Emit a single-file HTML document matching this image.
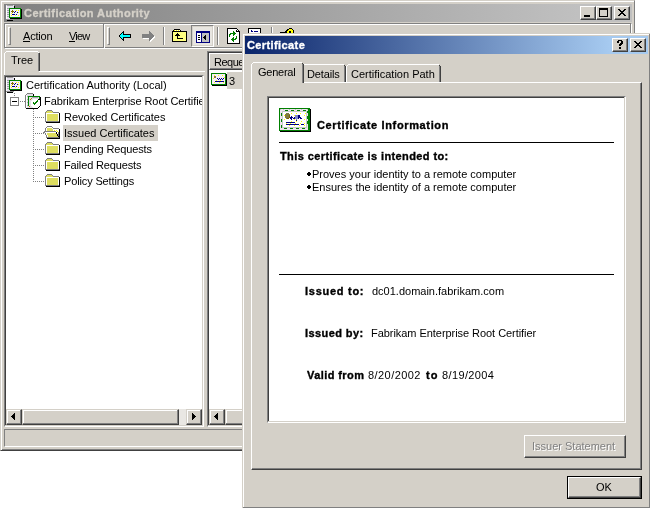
<!DOCTYPE html>
<html><head><meta charset="utf-8">
<style>
html,body{margin:0;padding:0;}
body{width:650px;height:508px;background:#fff;position:relative;overflow:hidden;font-family:"Liberation Sans",sans-serif;font-size:11px;color:#000;}
div,span,svg{box-sizing:border-box;}
.a{position:absolute;}
.t{position:absolute;white-space:nowrap;line-height:13px;will-change:transform;}
.b{font-weight:bold;-webkit-text-stroke:0.35px currentColor;}
.face{background:#D4D0C8;}
/* caption / raised button */
.cap{position:absolute;background:#D4D0C8;border:1px solid;border-color:#D4D0C8 #404040 #404040 #D4D0C8;box-shadow:inset -1px -1px #808080,inset 1px 1px #fff;}
.btn{position:absolute;background:#D4D0C8;border:1px solid;border-color:#fff #404040 #404040 #fff;box-shadow:inset -1px -1px #808080,inset 1px 1px #D4D0C8;}
.sunk{position:absolute;border:1px solid;border-color:#808080 #fff #fff #808080;box-shadow:inset -1px -1px #D4D0C8,inset 1px 1px #404040;}
.thin{position:absolute;border:1px solid;border-color:#808080 #fff #fff #808080;}
.vl{position:absolute;width:1px;}
.hl{position:absolute;height:1px;}
.dv{position:absolute;width:1px;background:repeating-linear-gradient(to bottom,#808080 0 1px,transparent 1px 2px);}
.dh{position:absolute;height:1px;background:repeating-linear-gradient(to right,#808080 0 1px,transparent 1px 2px);}
svg{position:absolute;shape-rendering:crispEdges;overflow:visible;}
</style></head><body>

<!-- ================= MAIN WINDOW ================= -->
<div class="a" style="left:0;top:0;width:635px;height:451px;background:#D4D0C8;border:1px solid;border-color:#D4D0C8 #808080 #404040 #D4D0C8;box-shadow:inset 1px 1px #fff,inset -1px 0 #D4D0C8,inset 0 -1px #808080;"></div>
<!-- title bar -->
<div class="a" style="left:4px;top:4px;width:628px;height:18px;background:linear-gradient(to right,#808080 0,#C0C0C0 574px,#C0C0C0 100%);"></div>
<div class="t b" id="mwtitle" style="left:24px;top:7px;color:#D4D0C8;letter-spacing:0.45px;">Certification Authority</div>
<!-- title icon -->
<svg id="ico-title" style="left:5px;top:4px" width="17" height="17" viewBox="0 0 17 17">
 <rect x="1" y="1" width="8" height="15" fill="#E4E0EC"/>
 <rect x="2" y="1" width="6" height="1" fill="#A0A0A0"/>
 <rect x="1" y="2" width="1" height="13" fill="#fff"/>
 <rect x="2" y="4" width="2" height="1" fill="#A0A0A8"/><rect x="2" y="6" width="2" height="1" fill="#A0A0A8"/><rect x="2" y="8" width="2" height="1" fill="#A0A0A8"/><rect x="2" y="10" width="2" height="1" fill="#A0A0A8"/><rect x="2" y="12" width="2" height="1" fill="#A0A0A8"/>
 <rect x="1" y="15" width="8" height="1" fill="#909090"/>
 <rect x="2" y="16" width="6" height="1" fill="#000"/>
 <rect x="9" y="2" width="1" height="2" fill="#000"/>
 <rect x="5" y="5" width="12" height="10" fill="#000"/>
 <rect x="4" y="4" width="12" height="10" fill="#008000"/>
 <rect x="5" y="5" width="10" height="8" fill="#F4F0FA"/>
 <path d="M7 6h1v1h1v1h-1v1h-1v-1h-1v-1h1z" fill="#8A7000"/>
 <path d="M11 6h1v1h-1zM13 6h1v1h-1zM6 9h1v1h-1zM13 8h1v1h-1zM6 12h1v-1h0v1zM6 11h1v1h-1zM10 11h1v1h-1zM13 11h1v1h-1z" fill="#FF0"/>
 <path d="M10 7h1v1h-1zM9 8h1v1h-1zM12 8h1v1h-1zM7 10h3v1h-3zM11 10h1v1h-1z" fill="#000080"/>
</svg>
<!-- caption buttons -->
<div class="btn" style="left:580px;top:6px;width:16px;height:14px;"></div>
<div class="a" style="left:584px;top:15px;width:6px;height:2px;background:#000;"></div>
<div class="btn" style="left:596px;top:6px;width:16px;height:14px;"></div>
<div class="a" style="left:599px;top:8px;width:9px;height:9px;border:1px solid #000;border-top-width:2px;"></div>
<div class="btn" style="left:614px;top:6px;width:16px;height:14px;"></div>
<svg style="left:618px;top:9px" width="8" height="7" viewBox="0 0 8 7"><path d="M0 0h2v1h-2zM6 0h2v1h-2zM1 1h2v1h-2zM5 1h2v1h-2zM2 2h4v1h-4zM3 3h2v1h-2zM2 4h4v1h-4zM1 5h2v1h-2zM5 5h2v1h-2zM0 6h2v1h-2zM6 6h2v1h-2z" fill="#000"/></svg>

<!-- rebar (etched) -->
<div class="a" style="left:4px;top:23px;width:628px;height:26px;border:1px solid;border-color:#808080 #fff #fff #808080;box-shadow:inset -1px -1px #808080,inset 1px 1px #fff;"></div>
<!-- band 1 gripper -->
<div class="a" style="left:8px;top:27px;width:3px;height:18px;border:1px solid;border-color:#fff #808080 #808080 #fff;"></div>
<div class="t" style="left:23px;top:30px;letter-spacing:-0.2px;">Action</div>
<div class="a" style="left:23px;top:41px;width:7px;height:1px;background:#000;"></div>
<div class="t" style="left:69px;top:30px;letter-spacing:-0.8px;">View</div>
<div class="a" style="left:69px;top:41px;width:6px;height:1px;background:#000;"></div>
<!-- band separator -->
<div class="vl" style="left:103px;top:24px;height:24px;background:#808080;"></div>
<div class="vl" style="left:104px;top:24px;height:24px;background:#fff;"></div>
<!-- band 2 gripper -->
<div class="a" style="left:107px;top:27px;width:3px;height:18px;border:1px solid;border-color:#fff #808080 #808080 #fff;"></div>
<!-- back arrow -->
<svg style="left:118px;top:30px" width="14" height="12" viewBox="0 0 14 12">
 <path d="M1 5h1v2h-1zM2 4h1v4h-1zM3 3h1v6h-1zM4 2h1v8h-1zM5 1h1v10h-1zM6 4h7v4h-7z" fill="#000"/>
 <path d="M2 5h1v2h-1zM3 4h1v4h-1zM4 3h1v6h-1zM5 5h7v2h-7z" fill="#0FF"/>
</svg>
<!-- forward arrow disabled -->
<svg style="left:141px;top:30px" width="15" height="13" viewBox="0 0 15 13">
 <path d="M1 4h7v4h-7zM8 1h1v10h-1zM9 2h1v8h-1zM10 3h1v6h-1zM11 4h1v4h-1zM12 5h1v2h-1z" fill="#fff" transform="translate(1,1)"/>
 <path d="M1 4h7v4h-7zM8 1h1v10h-1zM9 2h1v8h-1zM10 3h1v6h-1zM11 4h1v4h-1zM12 5h1v2h-1z" fill="#808080"/>
</svg>
<!-- separator -->
<div class="vl" style="left:163px;top:27px;height:18px;background:#808080;"></div>
<div class="vl" style="left:164px;top:27px;height:18px;background:#fff;"></div>
<!-- folder up -->
<svg style="left:172px;top:29px" width="15" height="13" viewBox="0 0 15 13">
 <path d="M2 0h6v1h1v1h6v11h-15v-11h1v-1h1z" fill="#000"/>
 <path d="M1 3h13v9h-13z" fill="#FFFF80"/>
 <path d="M2 1h1v1h-1zM4 1h1v1h-1zM6 1h1v1h-1z" fill="#FFFF00"/>
 <path d="M3 1h1v1h-1zM5 1h1v1h-1zM7 1h1v1h-1z" fill="#fff"/>
 <path d="M5 4h1v1h1v1h1v1h-2v2h5v1h-6v-3h-2v-1h1v-1h1z" fill="#000"/>
</svg>
<!-- pressed toggle button -->
<div class="a" style="left:191px;top:25px;width:23px;height:22px;border:1px solid;border-color:#808080 #fff #fff #808080;background:#E8E6E1;box-shadow:inset 1px 1px #D4D0C8,inset -1px -1px #D4D0C8;"></div>
<svg style="left:196px;top:31px" width="14" height="12" viewBox="0 0 14 12">
 <rect x="0" y="0" width="14" height="12" fill="#000080"/>
 <rect x="1" y="2" width="4" height="9" fill="#fff"/>
 <rect x="6" y="2" width="7" height="9" fill="#C0C0C0"/>
 <rect x="2" y="4" width="2" height="1" fill="#000"/><rect x="2" y="6" width="2" height="1" fill="#000"/><rect x="2" y="8" width="2" height="1" fill="#000"/>
 <path d="M7 6h1v1h-1zM8 5h1v3h-1zM9 4h1v5h-1z" fill="#000"/>
</svg>
<!-- separator -->
<div class="vl" style="left:217px;top:27px;height:18px;background:#808080;"></div>
<div class="vl" style="left:218px;top:27px;height:18px;background:#fff;"></div>
<!-- refresh icon -->
<svg style="left:227px;top:28px" width="13" height="16" viewBox="0 0 13 16">
 <path d="M0 0h10v1h1v1h1v1h1v13h-13z" fill="#000"/>
 <path d="M1 1h8v3h3v11h-11z" fill="#fff"/>
 <path d="M9 1h1v1h1v1h-1v-1h-1z" fill="#fff"/>
 <path d="M6 3h1v1h1v1h1v1h-1v1h-1v1h-1v-2h-2v1h-1v2h-1v-3h1v-1h3z" fill="#008000"/>
 <path d="M9 8h1v3h-1v1h-2v2h-1v-1h-1v-1h-1v-1h1v-1h1v-1h1v2h1v-1h1z" fill="#008000"/>
</svg>
<!-- properties icon -->
<svg style="left:248px;top:28px" width="14" height="6" viewBox="0 0 14 6">
 <rect x="0" y="0" width="13" height="6" fill="#000"/>
 <rect x="1" y="1" width="11" height="5" fill="#fff"/>
 <rect x="3" y="2" width="1" height="1" fill="#000080"/><rect x="3" y="3" width="2" height="1" fill="#000080"/>
 <rect x="6" y="3" width="4" height="1" fill="#000080"/>
</svg>
<div class="vl" style="left:271px;top:27px;height:6px;background:#808080;"></div>
<div class="vl" style="left:272px;top:27px;height:6px;background:#fff;"></div>
<!-- help icon -->
<svg style="left:280px;top:28px" width="15" height="6" viewBox="0 0 15 6">
 <rect x="0" y="4" width="5" height="1" fill="#000"/>
 <path d="M5 3h1v-1h1v-1h2v-1h3v1h1v1h1v4h-9z" fill="#000"/>
 <path d="M7 3h1v-1h1v-1h3v1h1v4h-6z" fill="#FF0"/>
 <rect x="9" y="3" width="2" height="3" fill="#000"/>
</svg>

<!-- Tree tab -->
<div class="hl" style="left:39px;top:71px;width:166px;background:#fff;"></div>
<div class="vl" style="left:4px;top:53px;height:23px;background:#fff;"></div>
<div class="a" style="left:5px;top:52px;width:1px;height:1px;background:#fff;"></div>
<div class="hl" style="left:6px;top:51px;width:32px;background:#fff;"></div>
<div class="a" style="left:38px;top:52px;width:1px;height:1px;background:#fff;"></div>
<div class="vl" style="left:38px;top:53px;height:18px;background:#808080;"></div>
<div class="vl" style="left:39px;top:53px;height:18px;background:#404040;"></div>
<div class="t" style="left:11px;top:54px;">Tree</div>

<!-- Tree pane -->
<div class="sunk" style="left:4px;top:75px;width:200px;height:352px;background:#fff;"></div>
<!-- tree rows -->
<div class="a" style="left:0;top:0;width:202px;height:409px;overflow:hidden;">
<svg id="ico-ca" style="left:5px;top:76px" width="17" height="17" viewBox="0 0 17 17">
 <rect x="1" y="1" width="8" height="15" fill="#E4E0EC"/>
 <rect x="2" y="1" width="6" height="1" fill="#A0A0A0"/>
 <rect x="1" y="2" width="1" height="13" fill="#fff"/>
 <rect x="2" y="4" width="2" height="1" fill="#A0A0A8"/><rect x="2" y="6" width="2" height="1" fill="#A0A0A8"/><rect x="2" y="8" width="2" height="1" fill="#A0A0A8"/><rect x="2" y="10" width="2" height="1" fill="#A0A0A8"/><rect x="2" y="12" width="2" height="1" fill="#A0A0A8"/>
 <rect x="1" y="15" width="8" height="1" fill="#909090"/>
 <rect x="2" y="16" width="6" height="1" fill="#000"/>
 <rect x="9" y="2" width="1" height="2" fill="#000"/>
 <rect x="5" y="5" width="12" height="10" fill="#000"/>
 <rect x="4" y="4" width="12" height="10" fill="#008000"/>
 <rect x="5" y="5" width="10" height="8" fill="#F4F0FA"/>
 <path d="M7 6h1v1h1v1h-1v1h-1v-1h-1v-1h1z" fill="#8A7000"/>
 <path d="M11 6h1v1h-1zM13 6h1v1h-1zM6 9h1v1h-1zM13 8h1v1h-1zM6 12h1v-1h0v1zM6 11h1v1h-1zM10 11h1v1h-1zM13 11h1v1h-1z" fill="#FF0"/>
 <path d="M10 7h1v1h-1zM9 8h1v1h-1zM12 8h1v1h-1zM7 10h3v1h-3zM11 10h1v1h-1z" fill="#000080"/>
</svg>
<div class="t" style="left:26px;top:79px;">Certification Authority (Local)</div>
<!-- row 2 -->
<div class="dv" style="left:14px;top:93px;height:4px;"></div>
<div class="a" style="left:10px;top:97px;width:9px;height:9px;border:1px solid #808080;background:#fff;"></div>
<div class="a" style="left:12px;top:101px;width:5px;height:1px;background:#000;"></div>
<div class="dh" style="left:20px;top:101px;width:5px;"></div>
<svg style="left:24px;top:92px" width="18" height="18" viewBox="0 0 18 18">
 <path d="M3 1h6v1h-6zM2 2h1v1h-1zM1 3h1v1h-1zM1 4h1v1h-1zM1 5h1v1h-1zM1 6h1v1h-1zM1 7h1v1h-1zM1 8h1v1h-1zM0 9h2v1h-2zM1 10h1v1h-1zM1 11h1v1h-1zM1 12h1v1h-1zM1 13h1v1h-1zM1 14h1v1h-1zM1 15h1v1h-1zM9 17h1v1h-1z" fill="#808080"/>
 <path d="M3 2h6v1h-6zM3 3h6v1h-6zM3 5h1v1h-1zM5 5h3v1h-3zM14 5h1v1h-1zM3 6h1v1h-1zM5 6h2v1h-2zM8 6h7v1h-7zM5 7h1v1h-1zM7 7h2v1h-2zM3 8h1v1h-1zM5 8h3v1h-3zM3 9h1v1h-1zM5 9h2v1h-2zM5 10h2v1h-2zM3 11h1v1h-1zM5 11h2v1h-2zM3 12h1v1h-1zM5 12h2v1h-2zM5 13h2v1h-2zM3 14h2v1h-2zM6 14h2v1h-2zM3 15h6v1h-6z" fill="#E4E0E8"/>
 <path d="M9 2h1v1h-1zM9 3h1v1h-1zM16 5h1v1h-1zM16 6h1v1h-1zM14 7h3v1h-3zM16 8h1v1h-1zM16 9h1v1h-1zM16 10h1v1h-1zM16 11h1v1h-1zM16 12h1v1h-1zM16 13h1v1h-1zM15 14h1v1h-1zM14 15h1v1h-1zM2 16h12v1h-12z" fill="#000"/>
 <path d="M2 3h1v1h-1zM2 4h1v1h-1zM2 5h1v1h-1zM2 6h1v1h-1zM2 7h1v1h-1zM9 7h5v1h-5zM2 8h1v1h-1zM8 8h5v1h-5zM14 8h2v1h-2zM2 9h1v1h-1zM7 9h5v1h-5zM14 9h2v1h-2zM2 10h1v1h-1zM7 10h2v1h-2zM10 10h1v1h-1zM13 10h3v1h-3zM2 11h1v1h-1zM7 11h2v1h-2zM12 11h4v1h-4zM2 12h1v1h-1zM7 12h3v1h-3zM11 12h5v1h-5zM2 13h1v1h-1zM7 13h9v1h-9zM2 14h1v1h-1zM8 14h7v1h-7zM2 15h1v1h-1zM9 15h5v1h-5z" fill="#fff"/>
 <path d="M3 4h1v1h-1zM8 5h6v1h-6zM3 7h1v1h-1zM3 10h1v1h-1zM3 13h1v1h-1z" fill="#A8A8B0"/>
 <path d="M4 4h12v1h-12zM4 5h1v1h-1zM15 5h1v1h-1zM4 6h1v1h-1zM15 6h1v1h-1zM4 7h1v1h-1zM4 8h1v1h-1zM13 8h1v1h-1zM4 9h1v1h-1zM12 9h2v1h-2zM4 10h1v1h-1zM9 10h1v1h-1zM11 10h2v1h-2zM4 11h1v1h-1zM9 11h3v1h-3zM4 12h1v1h-1zM10 12h1v1h-1zM4 13h1v1h-1z" fill="#008000"/>
 <path d="M7 6h1v1h-1zM6 7h1v1h-1zM5 14h1v1h-1z" fill="#B08000"/>
</svg>
<div class="t" style="left:44px;top:95px;letter-spacing:-0.08px;">Fabrikam Enterprise Root Certifier</div>
<!-- child lines -->
<div class="dv" style="left:33px;top:109px;height:73px;"></div>
<div class="dh" style="left:35px;top:117px;width:10px;"></div>
<div class="dh" style="left:35px;top:133px;width:10px;"></div>
<div class="dh" style="left:35px;top:149px;width:10px;"></div>
<div class="dh" style="left:35px;top:165px;width:10px;"></div>
<div class="dh" style="left:35px;top:181px;width:10px;"></div>
<!-- folders -->
<svg style="left:44px;top:108px" width="16" height="15" viewBox="0 0 16 15"><use href="#fold"/></svg>
<svg style="left:42px;top:125px" width="19" height="14" viewBox="0 0 19 14"><use href="#foldopen"/></svg>
<svg style="left:44px;top:140px" width="16" height="15" viewBox="0 0 16 15"><use href="#fold"/></svg>
<svg style="left:44px;top:156px" width="16" height="15" viewBox="0 0 16 15"><use href="#fold"/></svg>
<svg style="left:44px;top:172px" width="16" height="15" viewBox="0 0 16 15"><use href="#fold"/></svg>
<div class="t" style="left:64px;top:111px;">Revoked Certificates</div>
<div class="a" style="left:63px;top:125px;width:95px;height:16px;background:#D4D0C8;"></div>
<div class="t" style="left:64px;top:127px;">Issued Certificates</div>
<div class="t" style="left:64px;top:143px;letter-spacing:-0.13px;">Pending Requests</div>
<div class="t" style="left:64px;top:159px;letter-spacing:-0.14px;">Failed Requests</div>
<div class="t" style="left:64px;top:175px;letter-spacing:-0.14px;">Policy Settings</div>
</div>
<!-- tree h scrollbar -->
<div class="a" style="left:6px;top:409px;width:196px;height:16px;background:#E9E7E3;"></div>
<div class="cap" style="left:6px;top:409px;width:16px;height:16px;"></div>
<svg style="left:11px;top:413px" width="4" height="7" viewBox="0 0 4 7"><path d="M3 0h1v7h-1zM2 1h1v5h-1zM1 2h1v3h-1zM0 3h1v1h-1z" fill="#000"/></svg>
<div class="cap" style="left:22px;top:409px;width:157px;height:16px;"></div>
<div class="cap" style="left:186px;top:409px;width:16px;height:16px;"></div>
<svg style="left:192px;top:413px" width="4" height="7" viewBox="0 0 4 7"><path d="M0 0h1v7h-1zM1 1h1v5h-1zM2 2h1v3h-1zM3 3h1v1h-1z" fill="#000"/></svg>

<!-- List pane -->
<div class="sunk" style="left:207px;top:51px;width:60px;height:376px;background:#fff;"></div>
<div class="btn" style="left:209px;top:53px;width:60px;height:17px;border-color:#fff #404040 #404040 #fff;box-shadow:inset -1px -1px #808080;"></div>
<div class="t" style="left:214px;top:56px;letter-spacing:-0.5px;">Requested</div>
<svg style="left:211px;top:73px" width="16" height="13" viewBox="0 0 16 13">
 <rect x="1" y="1" width="15" height="12" fill="#000"/>
 <rect x="0" y="0" width="15" height="12" fill="#008000"/>
 <rect x="1" y="1" width="13" height="10" fill="#F4F0FA"/>
 <rect x="3" y="3" width="2" height="2" fill="#8A7A40"/>
 <path d="M6 5h1v1h-1zM7 6h1v1h-1zM8 5h1v1h-1zM10 5h1v1h-1zM9 6h1v1h-1zM11 6h1v1h-1zM12 5h1v1h-1z" fill="#000080"/>
 <rect x="4" y="8" width="9" height="1" fill="#000080"/>
 <path d="M3 2h1v1h-1zM7 2h1v1h-1zM11 2h1v1h-1zM2 5h1v1h-1zM13 4h1v1h-1zM3 9h1v1h-1zM8 9h1v1h-1zM12 9h1v1h-1zM5 7h1v1h-1zM9 7h1v1h-1z" fill="#FF0"/>
</svg>
<div class="a" style="left:227px;top:72px;width:30px;height:17px;background:#D4D0C8;"></div>
<div class="t" style="left:229px;top:75px;">3</div>
<div class="a" style="left:209px;top:409px;width:40px;height:16px;background:#E9E7E3;"></div>
<div class="cap" style="left:209px;top:409px;width:16px;height:16px;"></div>
<svg style="left:214px;top:413px" width="4" height="7" viewBox="0 0 4 7"><path d="M3 0h1v7h-1zM2 1h1v5h-1zM1 2h1v3h-1zM0 3h1v1h-1z" fill="#000"/></svg>
<div class="cap" style="left:225px;top:409px;width:40px;height:16px;"></div>

<!-- status bar -->
<div class="thin" style="left:4px;top:429px;width:627px;height:18px;"></div>

<!-- ================= DIALOG ================= -->
<div class="a" style="left:242px;top:33px;width:409px;height:476px;background:#D4D0C8;border:1px solid;border-color:#D4D0C8 #404040 #404040 #D4D0C8;box-shadow:inset -1px -1px #808080,inset 1px 1px #fff;"></div>
<div class="a" style="left:245px;top:36px;width:403px;height:18px;background:linear-gradient(to right,#0A246A 0,#A6CAF0 365px,#A6CAF0 100%);"></div>
<div class="t b" style="left:247px;top:39px;color:#fff;letter-spacing:0.4px;">Certificate</div>
<div class="btn" style="left:612px;top:38px;width:16px;height:14px;"></div>
<svg style="left:617px;top:40px" width="7" height="9" viewBox="0 0 7 9"><path d="M1 0h4v1h1v3h-1v1h-1v1h-2v-2h1v-1h1v-2h-2v2h-2v-2h1z M2 7h2v2h-2z" fill="#000"/></svg>
<div class="btn" style="left:630px;top:38px;width:16px;height:14px;"></div>
<svg style="left:634px;top:41px" width="8" height="7" viewBox="0 0 8 7"><path d="M0 0h2v1h-2zM6 0h2v1h-2zM1 1h2v1h-2zM5 1h2v1h-2zM2 2h4v1h-4zM3 3h2v1h-2zM2 4h4v1h-4zM1 5h2v1h-2zM5 5h2v1h-2zM0 6h2v1h-2zM6 6h2v1h-2z" fill="#000"/></svg>

<!-- tab panel -->
<div class="a" style="left:251px;top:82px;width:391px;height:388px;border:1px solid;border-color:#fff #404040 #404040 #fff;box-shadow:inset -1px -1px #808080;"></div>
<!-- Details tab -->
<div class="hl" style="left:304px;top:64px;width:40px;background:#fff;"></div>
<div class="vl" style="left:344px;top:66px;height:16px;background:#808080;"></div>
<div class="vl" style="left:345px;top:66px;height:16px;background:#404040;"></div>
<div class="a" style="left:344px;top:65px;width:1px;height:1px;background:#404040;"></div>
<div class="t" style="left:307px;top:68px;letter-spacing:-0.15px;">Details</div>
<!-- Cert path tab -->
<div class="vl" style="left:346px;top:66px;height:16px;background:#fff;"></div>
<div class="a" style="left:347px;top:65px;width:1px;height:1px;background:#fff;"></div>
<div class="hl" style="left:348px;top:64px;width:91px;background:#fff;"></div>
<div class="vl" style="left:439px;top:66px;height:16px;background:#808080;"></div>
<div class="vl" style="left:440px;top:66px;height:16px;background:#404040;"></div>
<div class="a" style="left:439px;top:65px;width:1px;height:1px;background:#404040;"></div>
<div class="t" style="left:351px;top:68px;">Certification Path</div>
<!-- General tab (selected) -->
<div class="a" style="left:251px;top:63px;width:53px;height:21px;background:#D4D0C8;"></div>
<div class="vl" style="left:251px;top:64px;height:20px;background:#fff;"></div>
<div class="a" style="left:252px;top:63px;width:1px;height:1px;background:#fff;"></div>
<div class="hl" style="left:253px;top:62px;width:49px;background:#fff;"></div>
<div class="vl" style="left:302px;top:64px;height:19px;background:#808080;"></div>
<div class="vl" style="left:303px;top:64px;height:19px;background:#404040;"></div>
<div class="a" style="left:302px;top:63px;width:1px;height:1px;background:#404040;"></div>
<div class="t" style="left:258px;top:66px;letter-spacing:-0.25px;">General</div>

<!-- white box -->
<div class="sunk" style="left:267px;top:96px;width:359px;height:327px;background:#fff;"></div>
<svg style="left:279px;top:108px" width="32" height="24" viewBox="0 0 32 24">
 <rect x="1" y="1" width="31" height="23" fill="#000"/>
 <rect x="0" y="0" width="31" height="23" fill="#008000"/>
 <rect x="1" y="1" width="28" height="21" fill="#EEE4EE"/>
 <path d="M1 1h1v1h-1zM4 1h1v1h-1zM10 1h1v1h-1zM16 1h1v1h-1zM22 1h1v1h-1zM28 1h1v1h-1z" fill="#C0C0C0"/>
 <path d="M6 2h3v1h-3zM12 2h3v1h-3zM18 2h3v1h-3zM24 2h3v1h-3z" fill="#008000"/>
 <path d="M2 5h1v3h-1zM2 11h1v3h-1zM2 17h1v3h-1z" fill="#008000"/>
 <path d="M5 20h3v1h-3zM11 20h3v1h-3zM17 20h3v1h-3zM23 20h3v1h-3z" fill="#008000"/>
 <path d="M28 3h1v2h-1zM28 8h1v3h-1zM28 13h1v3h-1z" fill="#008000"/>
 <rect x="3" y="3" width="25" height="17" fill="#C8C8C8"/>
 <rect x="4" y="4" width="23" height="15" fill="#fff"/>
 <path d="M7 5h3v1h1v4h-1v1h-3v-1h-1v-4h1z" fill="#807A40"/>
 <path d="M10 7h1v3h-1v1h-2v-1h2z" fill="#806000"/>
 <path d="M3 5h0z M12 5h1v1h-1zM17 5h1v1h-1zM21 5h1v1h-1zM26 5h1v1h-1zM5 7h1v1h-1zM15 7h1v1h-1zM25 7h1v1h-1zM5 11h1v1h-1zM15 11h1v1h-1zM25 11h1v1h-1zM12 13h1v1h-1zM17 13h1v1h-1zM22 13h1v1h-1zM7 15h1v1h-1zM11 15h1v1h-1zM16 15h1v1h-1zM21 15h1v1h-1zM25 15h1v1h-1zM10 17h1v1h-1zM15 17h1v1h-1zM20 17h1v1h-1zM25 17h1v1h-1z" fill="#FF0"/>
 <path d="M16 7h3v4h-1v1h-1v-1h-1z" fill="#8088C8"/>
 <path d="M11 9h1v-1h1v1h1v1h1v-1h1v2h-2v-1h-1v1h-1v-1h-1zM11 10h1v1h-1zM12 11h1v1h-1zM17 12h1v1h-1zM19 7h2v1h-1v1h-1zM19 9h1v-1h1v1h1v1h1v1h-2v-1h-1v1h-1z" fill="#000080"/>
 <rect x="7" y="14" width="9" height="1" fill="#000080"/>
 <rect x="7" y="16" width="13" height="1" fill="#000080"/>
 <rect x="22" y="16" width="3" height="1" fill="#000080"/>
</svg>
<div class="t b" style="left:317px;top:119px;letter-spacing:0.64px;">Certificate Information</div>
<div class="hl" style="left:279px;top:142px;width:335px;background:#000;"></div>
<div class="t b" style="left:280px;top:150px;letter-spacing:0.4px;">This certificate is intended to:</div>
<svg style="left:307px;top:172px" width="4" height="4" viewBox="0 0 4 4"><path d="M1 0h2v1h1v2h-1v1h-2v-1h-1v-2h1z" fill="#000"/></svg>
<div class="t" style="left:312px;top:168px;">Proves your identity to a remote computer</div>
<svg style="left:307px;top:185px" width="4" height="4" viewBox="0 0 4 4"><path d="M1 0h2v1h1v2h-1v1h-2v-1h-1v-2h1z" fill="#000"/></svg>
<div class="t" style="left:312px;top:181px;">Ensures the identity of a remote computer</div>
<div class="hl" style="left:279px;top:274px;width:335px;background:#000;"></div>
<div class="t b" style="left:305px;top:285px;letter-spacing:0.73px;">Issued to:</div>
<div class="t" style="left:372px;top:285px;">dc01.domain.fabrikam.com</div>
<div class="t b" style="left:305px;top:327px;letter-spacing:0.42px;">Issued by:</div>
<div class="t" style="left:371px;top:327px;letter-spacing:-0.05px;">Fabrikam Enterprise Root Certifier</div>
<div class="t b" style="left:307px;top:369px;letter-spacing:0.42px;">Valid from</div>
<div class="t" style="left:368px;top:369px;letter-spacing:0.44px;">8/20/2002</div>
<div class="t b" style="left:426px;top:369px;letter-spacing:1px;">to</div>
<div class="t" style="left:442px;top:369px;letter-spacing:0.37px;">8/19/2004</div>

<!-- Issuer Statement button (disabled) -->
<div class="btn" style="left:524px;top:435px;width:102px;height:23px;"></div>
<div class="t" style="left:533px;top:441px;color:#fff;">Issuer Statement</div>
<div class="t" style="left:532px;top:440px;color:#808080;">Issuer Statement</div>
<!-- OK button -->
<div class="a" style="left:567px;top:476px;width:75px;height:23px;border:1px solid #000;"></div>
<div class="btn" style="left:568px;top:477px;width:73px;height:21px;"></div>
<div class="t" style="left:596px;top:481px;">OK</div>

<!-- symbol defs -->
<svg width="0" height="0" style="position:absolute">
 <defs>
  <g id="fold">
 <path d="M3 2h5v1h-5zM2 3h1v1h-1zM8 3h1v1h-1zM1 4h1v1h-1zM9 4h6v1h-6zM1 5h1v1h-1zM1 6h1v1h-1zM1 7h1v1h-1zM1 8h1v1h-1zM1 9h1v1h-1zM1 10h1v1h-1zM1 11h1v1h-1zM1 12h1v1h-1zM1 13h14v1h-14z" fill="#808080"/>
 <path d="M3 3h5v1h-5zM2 4h7v1h-7zM3 6h11v1h-11zM3 7h11v1h-11zM3 8h11v1h-11zM3 9h11v1h-11zM3 10h11v1h-11zM3 11h11v1h-11zM3 12h11v1h-11z" fill="#DEDE60"/>
 <path d="M2 5h13v1h-13zM2 6h1v1h-1zM14 6h1v1h-1zM2 7h1v1h-1zM14 7h1v1h-1zM2 8h1v1h-1zM14 8h1v1h-1zM2 9h1v1h-1zM14 9h1v1h-1zM2 10h1v1h-1zM14 10h1v1h-1zM2 11h1v1h-1zM14 11h1v1h-1zM2 12h1v1h-1zM14 12h1v1h-1z" fill="#fff"/>
 <path d="M15 5h1v1h-1zM15 6h1v1h-1zM15 7h1v1h-1zM15 8h1v1h-1zM15 9h1v1h-1zM15 10h1v1h-1zM15 11h1v1h-1zM15 12h1v1h-1zM15 13h1v1h-1zM2 14h14v1h-14z" fill="#000"/>
  </g>
  <g id="foldopen">
 <path d="M5 1h5v1h-5zM4 2h1v1h-1zM10 2h1v1h-1zM3 3h1v1h-1zM11 3h6v1h-6zM3 4h1v1h-1zM3 5h1v1h-1zM2 6h12v1h-12zM1 7h2v1h-2zM16 7h1v1h-1zM1 8h1v1h-1zM3 8h1v1h-1zM16 8h1v1h-1zM3 9h1v1h-1zM16 9h1v1h-1zM4 10h1v1h-1zM16 10h1v1h-1zM4 11h1v1h-1zM4 12h13v1h-13z" fill="#808080"/>
 <path d="M5 2h5v1h-5zM4 3h1v1h-1zM10 3h1v1h-1zM4 4h1v1h-1zM11 4h6v1h-6zM4 5h1v1h-1zM11 5h1v1h-1zM13 5h1v1h-1zM15 5h2v1h-2zM14 6h1v1h-1zM16 6h1v1h-1zM3 7h11v1h-11zM15 7h1v1h-1zM4 8h1v1h-1zM15 8h1v1h-1zM4 9h1v1h-1zM5 10h1v1h-1zM5 11h1v1h-1z" fill="#fff"/>
 <path d="M5 3h5v1h-5zM5 4h6v1h-6zM5 5h6v1h-6zM5 8h9v1h-9zM5 9h10v1h-10zM6 10h9v1h-9zM6 11h10v1h-10z" fill="#DEDE60"/>
 <path d="M17 4h1v1h-1zM17 5h1v1h-1zM17 6h1v1h-1zM14 7h1v1h-1zM17 7h1v1h-1zM14 8h1v1h-1zM17 8h1v1h-1zM15 9h1v1h-1zM17 9h1v1h-1zM15 10h1v1h-1zM17 10h1v1h-1zM16 11h2v1h-2zM17 12h1v1h-1zM5 13h13v1h-13z" fill="#000"/>
 <path d="M12 5h1v1h-1zM14 5h1v1h-1zM15 6h1v1h-1z" fill="#FFFF00"/>
  </g>
 </defs>
</svg>
</body></html>
